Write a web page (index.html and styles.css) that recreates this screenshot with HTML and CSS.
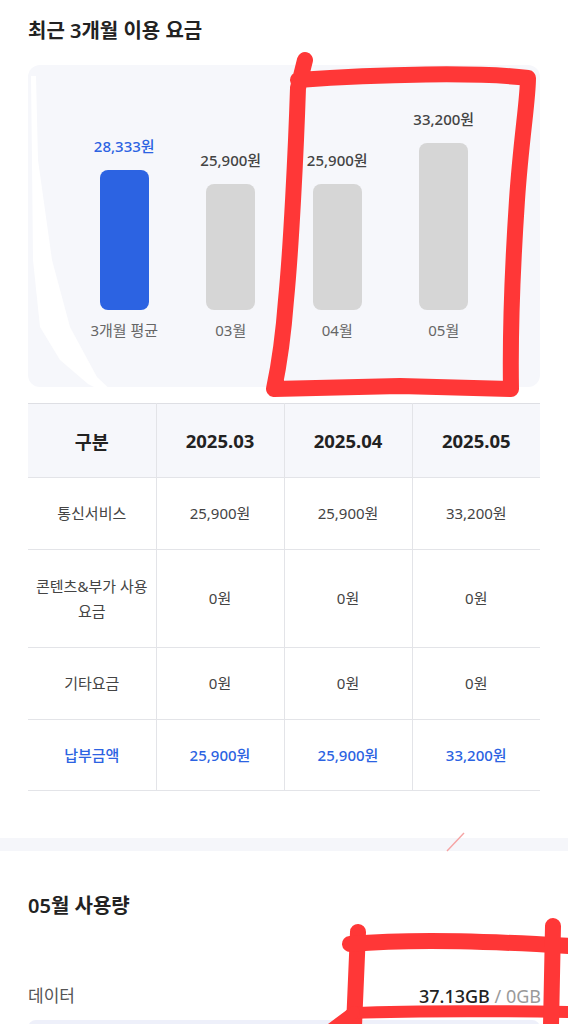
FILE: index.html
```html
<!DOCTYPE html>
<html lang="ko">
<head>
<meta charset="utf-8">
<title>최근 3개월 이용 요금</title>
<link rel="stylesheet" href="styles.css">
</head>
<body>
<div class="page">
  <section class="fee">
    <h2 class="sec-title">최근 3개월 이용 요금</h2>
    <div class="chart">
      <div class="col avg">
        <span class="val">28,333원</span>
        <div class="bar" style="height:140px"></div>
        <span class="mon">3개월 평균</span>
      </div>
      <div class="col">
        <span class="val">25,900원</span>
        <div class="bar" style="height:126px"></div>
        <span class="mon">03월</span>
      </div>
      <div class="col">
        <span class="val">25,900원</span>
        <div class="bar" style="height:126px"></div>
        <span class="mon">04월</span>
      </div>
      <div class="col">
        <span class="val">33,200원</span>
        <div class="bar" style="height:167px"></div>
        <span class="mon">05월</span>
      </div>
    </div>

    <table class="fee-table">
      <thead>
        <tr class="head">
          <th>구분</th>
          <th>2025.03</th>
          <th>2025.04</th>
          <th>2025.05</th>
        </tr>
      </thead>
      <tbody>
        <tr class="r1">
          <td class="lbl">통신서비스</td>
          <td>25,900원</td>
          <td>25,900원</td>
          <td>33,200원</td>
        </tr>
        <tr class="r2">
          <td class="lbl">콘텐츠&amp;부가 사용<br>요금</td>
          <td>0원</td>
          <td>0원</td>
          <td>0원</td>
        </tr>
        <tr class="r3">
          <td class="lbl">기타요금</td>
          <td>0원</td>
          <td>0원</td>
          <td>0원</td>
        </tr>
        <tr class="total">
          <td class="lbl">납부금액</td>
          <td>25,900원</td>
          <td>25,900원</td>
          <td>33,200원</td>
        </tr>
      </tbody>
    </table>
  </section>

  <div class="divider"></div>

  <section class="usage">
    <h2 class="sec-title">05월 사용량</h2>
    <div class="usage-row">
      <span class="u-label">데이터</span>
      <span class="u-amount">37.13GB <span class="u-total">/ 0GB</span></span>
    </div>
    <div class="track"></div>
  </section>

  <svg class="marks" width="568" height="1024" viewBox="0 0 568 1024" aria-hidden="true">
    <path class="erase" d="M31,76 L32,160 L33,260 L40,327 L60,360 L88,384 L106,393 L112,391 L97,377 L70,327 L52,260 L38,160 L36,76 Z"/>
    <g class="red">
      <path d="M305,60 L298,88 C296,150 291,250 286,300 C283,340 278,370 274,389 L400,386 L511,389 C510,330 513,260 517,200 C521,140 528,100 528,78 C480,72 380,74 298,80"/>
      <path d="M358,932 L354,1026"/>
      <path d="M350,944 C420,938 500,942 570,946"/>
      <path class="thin-red" d="M352,1013 C430,1010 500,1011 570,1012"/>
      <path d="M553,926 L551,1026"/>
      <path class="thin-red" d="M354,1012 L330,1030"/>
    </g>
    <path class="thin" d="M447,851 L464,833"/>
  </svg>
</div>
</body>
</html>
```

FILE: styles.css
```css
html, body {
  margin: 0;
  padding: 0;
  overflow: hidden;
  background: #ffffff;
}

body {
  font-family: "Noto Sans", "Noto Sans CJK KR", sans-serif;
  color: #222222;
}

.page {
  position: relative;
  width: 568px;
  height: 1024px;
  overflow: hidden;
  background: #ffffff;
}

.fee {
  padding: 16px 28px 0;
}

.sec-title {
  margin: 0;
  font-size: 20px;
  line-height: 30px;
  font-weight: 600;
  color: #222222;
}

/* chart */
.chart {
  margin-top: 19px;
  height: 322px;
  box-sizing: border-box;
  background: #f6f7fb;
  border-radius: 12px;
  padding: 0 43px 47px;
  display: flex;
  align-items: flex-end;
}

.col {
  flex: 1;
  display: flex;
  flex-direction: column;
  align-items: center;
}

.val {
  font-size: 15px;
  line-height: 20px;
  font-weight: 500;
  color: #444444;
  margin-bottom: 14px;
  white-space: nowrap;
}

.col.avg .val {
  color: #2c63e2;
}

.bar {
  width: 49px;
  border-radius: 8px;
  background: #d6d6d6;
}

.col.avg .bar {
  background: #2c63e2;
}

.mon {
  margin-top: 10px;
  font-size: 15px;
  line-height: 20px;
  color: #666666;
  white-space: nowrap;
}

/* table */
.fee-table {
  margin-top: 16px;
  width: 100%;
  border-collapse: collapse;
  table-layout: fixed;
  border-top: 1px solid #dedfe4;
}

.fee-table th,
.fee-table td {
  text-align: center;
  vertical-align: middle;
  border-left: 1px solid #e3e4e8;
  border-bottom: 1px solid #e3e4e8;
  padding: 0 2px;
}

.fee-table th:first-child,
.fee-table td:first-child {
  border-left: none;
}

.fee-table .head {
  height: 74px;
  background: #f6f7fb;
}

.fee-table th {
  font-size: 18.5px;
  font-weight: 700;
  color: #222222;
}

.fee-table td {
  font-size: 15px;
  line-height: 25px;
  color: #444444;
}

.fee-table .r1 { height: 72px; }
.fee-table .r2 { height: 98px; }
.fee-table .r3 { height: 72px; }
.fee-table .total { height: 71px; }

.fee-table .total td {
  color: #2c63e2;
  font-weight: 500;
}

/* divider */
.divider {
  margin-top: 47px;
  height: 13px;
  background: #f5f6fa;
}

/* usage */
.usage {
  padding: 40px 28px 0;
}

.usage-row {
  margin-top: 63px;
  display: flex;
  justify-content: space-between;
  align-items: center;
  line-height: 24px;
}

.u-label {
  font-size: 17px;
  color: #555555;
}

.u-amount {
  font-size: 18px;
  font-weight: 500;
  color: #222222;
  margin-right: -1px;
}

.u-total {
  font-weight: 400;
  color: #9a9a9a;
}

.track {
  margin-top: 12px;
  height: 16px;
  border-radius: 8px;
  background: #eef0fa;
}

/* overlay annotations */
.marks {
  position: absolute;
  left: 0;
  top: 0;
  pointer-events: none;
}

.marks .erase {
  fill: #ffffff;
  stroke: none;
}

.marks .red path {
  fill: none;
  stroke: #ff3737;
  stroke-width: 16;
  stroke-linecap: round;
  stroke-linejoin: round;
}

.marks .red path.thin-red {
  stroke-width: 12;
}

.marks .thin {
  fill: none;
  stroke: #f5a3a3;
  stroke-width: 1.4;
}
```
